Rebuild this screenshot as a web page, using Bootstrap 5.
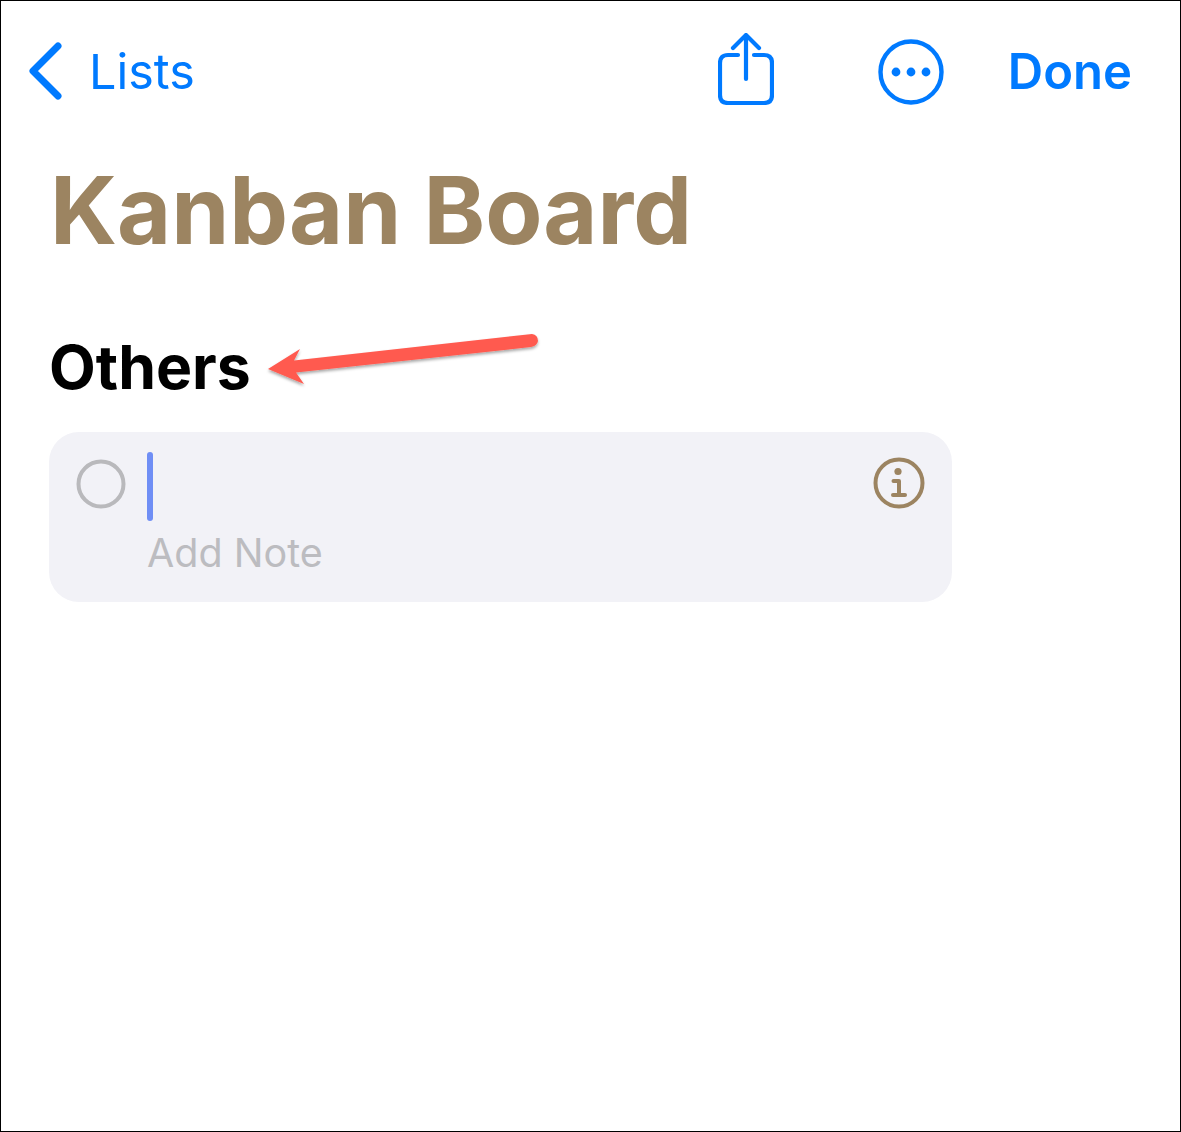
<!DOCTYPE html>
<html lang="en">
  <head>
    <meta charset="UTF-8" />
    <meta name="viewport" content="width=device-width, initial-scale=1" />
    <title>Kanban Board</title>
    <link
      href="https://cdn.jsdelivr.net/npm/bootstrap@5.3.0/dist/css/bootstrap.min.css"
      rel="stylesheet"
    />
    <style>
      body {
        font-family: Inter, "Liberation Sans", sans-serif;
        background: #fff;
      }
      .screen-frame {
        position: relative;
        height: 1132px;
        border: 1px solid #000;
        padding: 0 48px;
        overflow: hidden;
      }
      .top-bar {
        height: 142px;
        margin-left: -21px;
        margin-right: 0;
      }
      .back-link {
        color: #007aff;
        font-size: 48.5px;
        gap: 25px;
        text-decoration: none;
      }
      .back-chevron {
        margin-top: -2px;
      }
      .done-link {
        color: #007aff;
        font-size: 49px;
        font-weight: 600;
        text-decoration: none;
      }
      .bar-actions {
        gap: 104px;
      }
      .bar-right {
        gap: 64px;
      }
      .share-icon {
        margin-top: -7px;
      }
      .list-title {
        color: #9c8461;
        font-size: 93.3px;
        font-weight: 700;
        line-height: 1;
        margin: 21px 0 0 1px;
      }
      .group-title {
        color: #000;
        font-size: 60.7px;
        font-weight: 700;
        line-height: 1;
        margin: 80px 0 0 0;
      }
      .reminder-box {
        width: 903px;
        height: 170px;
        margin-top: 34px;
        background: #f2f2f7;
        border-radius: 30px;
        padding: 20px 27px 0 27px;
      }
      .caret-bar {
        width: 6px;
        height: 69px;
        background: #6f8ef5;
        border-radius: 3px;
      }
      .note-hint {
        color: #bcbcc0;
        font-size: 39.5px;
        line-height: 1;
        margin-top: 13px;
      }
      .text-col {
        margin-left: 21px;
      }
      .check-ring {
        margin-top: 7px;
      }
      .info-icon {
        margin-top: 5px;
      }
      .note-arrow {
        position: absolute;
        left: 0;
        top: 0;
      }
    </style>
  </head>
  <body>
    <div class="screen-frame">
      <div class="top-bar d-flex align-items-center justify-content-between">
        <a href="#" class="back-link d-flex align-items-center">
          <svg class="back-chevron" width="36" height="58" viewBox="0 0 36 58" fill="none">
            <path d="M30 4 L5 29 L30 54" stroke="#007aff" stroke-width="7" stroke-linecap="round" stroke-linejoin="round" />
          </svg>
          <span>Lists</span>
        </a>
        <div class="bar-right d-flex align-items-center">
          <div class="bar-actions d-flex align-items-center">
            <svg class="share-icon" width="56" height="72" viewBox="0 0 56 72" fill="none" stroke="#007aff" stroke-width="4.2" stroke-linecap="round" stroke-linejoin="round">
              <path d="M20 22 H10 Q2 22 2 30 V62 Q2 70 10 70 H46 Q54 70 54 62 V30 Q54 22 46 22 H36" />
              <path d="M28 46 V3" />
              <path d="M15 15 L28 2 L41 15" />
            </svg>
            <svg width="66" height="66" viewBox="0 0 66 66" fill="none">
              <circle cx="33" cy="33" r="30.5" stroke="#007aff" stroke-width="4.4" />
              <circle cx="18" cy="33" r="4.4" fill="#007aff" />
              <circle cx="33" cy="33" r="4.4" fill="#007aff" />
              <circle cx="48" cy="33" r="4.4" fill="#007aff" />
            </svg>
          </div>
          <a href="#" class="done-link">Done</a>
        </div>
      </div>

      <h1 class="list-title">Kanban Board</h1>
      <h2 class="group-title">Others</h2>

      <div class="reminder-box d-flex align-items-start">
        <svg class="check-ring flex-shrink-0" width="50" height="50" viewBox="0 0 50 50" fill="none">
          <circle cx="25" cy="25" r="22.5" stroke="#b9b9bc" stroke-width="4" />
        </svg>
        <div class="text-col flex-grow-1">
          <div class="caret-bar"></div>
          <div class="note-hint">Add Note</div>
        </div>
        <svg class="info-icon flex-shrink-0" width="52" height="52" viewBox="0 0 52 52" fill="none">
          <circle cx="26" cy="26" r="23.5" stroke="#9c8461" stroke-width="4" />
          <circle cx="25" cy="14.5" r="3.6" fill="#9c8461" />
          <path d="M20.5 24 H26 V38" stroke="#9c8461" stroke-width="4" stroke-linecap="round" stroke-linejoin="round" />
          <path d="M20 38 H32" stroke="#9c8461" stroke-width="4" stroke-linecap="round" />
        </svg>
      </div>

      <!-- annotation over the heading -->
      <svg class="note-arrow" width="1179" height="1130" viewBox="0 0 1179 1130" fill="none">
        <defs>
          <filter id="arrowShade" x="-5%" y="-30%" width="110%" height="170%">
            <feDropShadow dx="0" dy="2" stdDeviation="1.5" flood-color="#000" flood-opacity="0.35" />
          </filter>
        </defs>
        <path filter="url(#arrowShade)" fill="#ff5a4f" d="M531 333 Q537 334 537 340 Q536 345 530 346 L295 371.5 L303 383 L267 368 L299 348 L293 359.5 Z" />
      </svg>
    </div>

    <script src="https://cdn.jsdelivr.net/npm/bootstrap@5.3.0/dist/js/bootstrap.bundle.min.js"></script>
  </body>
</html>
